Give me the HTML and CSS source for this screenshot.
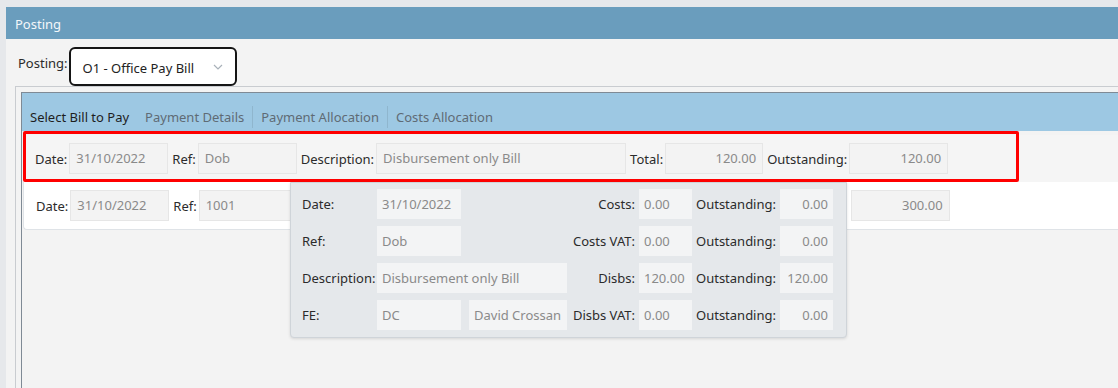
FILE: index.html
```html
<!doctype html>
<html lang="en">
<head>
  <meta charset="utf-8">
  <title>Posting</title>
  <link rel="stylesheet" href="styles.css">
</head>
<body>
  <div class="panel">
    <div class="panelHead">Posting</div>
    <div class="panelBody">
      <div class="postingRow">
        <span class="postingLabel">Posting:</span>
        <div class="select">
          <span>O1 - Office Pay Bill</span>
          <svg class="chevron" width="10" height="6" viewBox="0 0 10 6"><polyline points="1,1 5,5 9,1" fill="none" stroke="#a9b1b9" stroke-width="1.2"/></svg>
        </div>
      </div>
      <div class="outerFrame">
        <div class="innerFrame">
          <div class="tabs">
            <span class="tab active">Select Bill to Pay</span>
            <span class="tab">Payment Details</span>
            <span class="tab sep">Payment Allocation</span>
            <span class="tab sep">Costs Allocation</span>
          </div>
          <div class="billList">
            <div class="billRow selected">
              <span class="lbl">Date:</span><span class="field w99">31/10/2022</span>
              <span class="lbl">Ref:</span><span class="field w99">Dob</span>
              <span class="lbl">Description:</span><span class="field w250">Disbursement only Bill</span>
              <span class="lbl">Total:</span><span class="field w98 num">120.00</span>
              <span class="lbl">Outstanding:</span><span class="field w99 num">120.00</span>
            </div>
            <div class="billRow">
              <span class="lbl">Date:</span><span class="field w99">31/10/2022</span>
              <span class="lbl">Ref:</span><span class="field w99">1001</span>
              <!-- rest of the row sits under the popup -->
              <span class="field w99 num covered">300.00</span>
            </div>

            <div class="highlight"></div>

            <div class="tooltip">
              <span class="tLbl">Date:</span><span class="tField">31/10/2022</span><span></span>
              <span class="tLbl right">Costs:</span><span class="tField">0.00</span>
              <span class="tLbl">Outstanding:</span><span class="tField num">0.00</span>

              <span class="tLbl">Ref:</span><span class="tField">Dob</span><span></span>
              <span class="tLbl right">Costs VAT:</span><span class="tField">0.00</span>
              <span class="tLbl">Outstanding:</span><span class="tField num">0.00</span>

              <span class="tLbl">Description:</span><span class="tField span2">Disbursement only Bill</span>
              <span class="tLbl right">Disbs:</span><span class="tField">120.00</span>
              <span class="tLbl">Outstanding:</span><span class="tField num">120.00</span>

              <span class="tLbl">FE:</span><span class="tField">DC</span><span class="tField fe">David Crossan</span>
              <span class="tLbl right">Disbs VAT:</span><span class="tField">0.00</span>
              <span class="tLbl">Outstanding:</span><span class="tField num">0.00</span>
            </div>
          </div>
        </div>
      </div>
    </div>
  </div>
</body>
</html>
```

FILE: styles.css
```css
html, body{
    margin: 0;
    height: 100%;
}
body{
    background: #e6e8eb;
    font-family: "Noto Sans", "Open Sans", sans-serif;
    font-size: 13px;
    color: #2b2b2b;
    overflow: hidden;
}
.panel{
    margin: 7px 0 0 6px;
    width: 1112px;
    height: 381px;
    overflow: hidden;
    background: #f3f3f3;
}
.panelHead{
    height: 32px;
    line-height: 30px;
    padding-top: 2px;
    box-sizing: border-box;
    background: #6a9dbd;
    color: #f4f7fa;
    padding-left: 9px;
}
.panelBody{
    padding: 8px 0 0 9px;
}
.postingRow{
    display: flex;
    align-items: flex-start;
    gap: 1px;
}
.postingLabel{
    padding: 7px 0 0 3px;
}
.select{
    box-sizing: border-box;
    width: 168px;
    height: 39px;
    border: 2px solid #151515;
    border-radius: 6px;
    background: #fff;
    display: flex;
    align-items: center;
    justify-content: space-between;
    padding: 2px 12px 0 12px;
    color: #222;
}
.chevron{
    margin-top: -2px;
}
/* frames */
.outerFrame{
    border: 1px solid #c9ccd0;
    border-right: none;
    padding: 5px 0 5px 5px;
    height: 400px;
}
.innerFrame{
    border: 1px solid #7f8a95;
    border-right: none;
    height: 400px;
}
.tabs{
    height: 38px;
    background: #9dc8e3;
    display: flex;
    align-items: flex-end;
    box-sizing: border-box;
    padding-bottom: 3px;
}
.tab{
    padding: 0 8px;
    line-height: 22px;
    color: #5f6b75;
}
.tab.active{
    color: #1e1e1e;
}
.tab.sep{
    border-left: 1px solid #8fb6ce;
}
/* rows */
.billList{
    position: relative;
    padding-top: 4px;
}
.billRow{
    display: flex;
    align-items: center;
    height: 47px;
    margin-left: 1px;
    padding-left: 8px;
    background: #fff;
    border: 1px solid #dfe3e7;
    border-top: none;
    border-right: none;
    border-radius: 0 0 0 4px;
}
.billRow.selected{
    background: #f5f5f5;
    border: none;
    border-radius: 0;
    height: 47px;
}
.lbl{
    color: #2b2b2b;
    padding: 0 2px 0 4px;
}
.field{
    box-sizing: border-box;
    height: 31px;
    line-height: 29px;
    border: 1px solid #e6e6e6;
    background: #f3f3f3;
    color: #8a8a8a;
    padding: 0 6px;
    white-space: nowrap;
    overflow: hidden;
}
.field.covered{
    margin-left: 553px;
}
.w98{ width: 98px; }
.w99{ width: 99px; }
.w250{ width: 250px; }
.num{ text-align: right; }

.highlight{
    position: absolute;
    left: 1px;
    top: 0;
    width: 996px;
    height: 51px;
    box-sizing: border-box;
    border: 3px solid #ff0000;
    border-radius: 2px;
}
/* hover popup */
.tooltip{
    position: absolute;
    left: 268px;
    top: 51px;
    box-sizing: border-box;
    width: 557px;
    height: 156px;
    padding: 6px 13px 0 11px;
    background: #e5e8eb;
    border: 1px solid #cfd4d9;
    border-radius: 0 0 4px 4px;
    box-shadow: 0 1px 3px rgba(0,0,0,0.12);
    display: grid;
    grid-template-columns: 71px 84px 102px 64px 53px 80px 53px;
    grid-auto-rows: 30px;
    column-gap: 4px;
    row-gap: 7px;
}
.tLbl{
    line-height: 30px;
    white-space: nowrap;
    color: #2b2b2b;
}
.tLbl.right{
    text-align: right;
}
.tField{
    background: #f3f4f5;
    color: #8a8a8a;
    line-height: 30px;
    padding: 0 5px;
    white-space: nowrap;
    overflow: hidden;
}
.tField.span2{
    grid-column: span 2;
}
.tField.fe{
    margin-left: 4px;
}
```
